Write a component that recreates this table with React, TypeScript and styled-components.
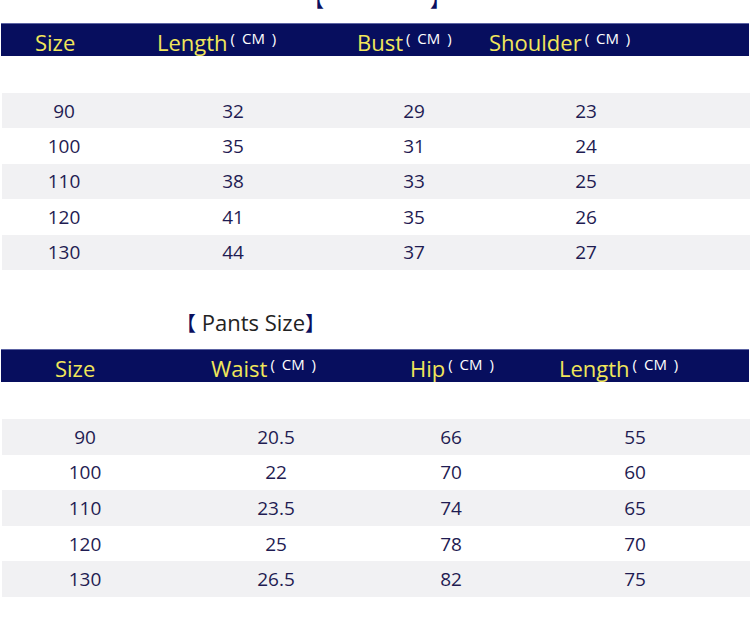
import styled, { createGlobalStyle } from "styled-components";

const GlobalStyle = createGlobalStyle`
  html, body {
    margin: 0;
    padding: 0;
    background: #ffffff;
  }
  body {
    font-family: "Open Sans", "Noto Sans", "Noto Sans CJK SC", sans-serif;
  }
`;

type Table = {
  columns: string;
  heads: { label: string; unit?: boolean; pad: number }[];
  rows: string[][];
};

const topTable: Table = {
  columns: "126px 212px 150px 194px 1fr",
  heads: [
    { label: "Size", pad: 34 },
    { label: "Length", unit: true, pad: 30 },
    { label: "Bust", unit: true, pad: 18 },
    { label: "Shoulder", unit: true, pad: 0 },
  ],
  rows: [
    ["90", "32", "29", "23"],
    ["100", "35", "31", "24"],
    ["110", "38", "33", "25"],
    ["120", "41", "35", "26"],
    ["130", "44", "37", "27"],
  ],
};

const pantsTable: Table = {
  columns: "168px 214px 136px 232px",
  heads: [
    { label: "Size", pad: 54 },
    { label: "Waist", unit: true, pad: 42 },
    { label: "Hip", unit: true, pad: 27 },
    { label: "Length", unit: true, pad: 40 },
  ],
  rows: [
    ["90", "20.5", "66", "55"],
    ["100", "22", "70", "60"],
    ["110", "23.5", "74", "65"],
    ["120", "25", "78", "70"],
    ["130", "26.5", "82", "75"],
  ],
};

const Page = styled.div`
  width: 750px;
  height: 630px;
  overflow: hidden;
  display: flex;
  flex-direction: column;
`;

// section title, placed from the left edge like the reference
const Title = styled.div<{ $offset: number; $height: number; $left: number }>`
  height: ${(p) => p.$height}px;
  margin-top: ${(p) => p.$offset}px;
  padding-left: ${(p) => p.$left}px;
  display: flex;
  align-items: center;
  font-size: 22px;
  color: #222222;
  white-space: nowrap;
`;

const Bracket = styled.span`
  font-family: "Noto Sans CJK SC", sans-serif;
  color: #0a0f5f;
  font-size: 20px;
`;

const HiddenText = styled.span<{ $w: number }>`
  display: inline-block;
  width: ${(p) => p.$w}px;
  visibility: hidden;
`;

const HeaderBar = styled.div<{ $columns: string }>`
  display: grid;
  grid-template-columns: ${(p) => p.$columns};
  height: 33px;
  margin-left: 1px;
  width: 748px;
  background: #070e5e;
  border-top: 1px solid #5c63a3;
  box-sizing: border-box;
`;

const HeadCell = styled.div<{ $pad: number }>`
  padding-left: ${(p) => p.$pad}px;
  display: flex;
  align-items: flex-start;
  white-space: nowrap;
  color: #f1e65a;
`;

const HeadLabel = styled.span`
  font-size: 22px;
  line-height: 33px;
  margin-top: 2px;
`;

const Unit = styled.span`
  font-size: 15px;
  line-height: 15px;
  margin-top: 7px;
  margin-left: 3px;
  color: #ffffff;
  word-spacing: 3px;
`;

const Gap = styled.div`
  height: 37px;
`;

const Row = styled.div<{ $columns: string; $shade: boolean; $h: number }>`
  display: grid;
  grid-template-columns: ${(p) => p.$columns};
  height: ${(p) => p.$h}px;
  margin-left: 2px;
  background: ${(p) => (p.$shade ? "#f1f1f3" : "#ffffff")};
  align-items: center;
`;

const Cell = styled.div`
  text-align: center;
  font-size: 19px;
  color: #1f1c52;
  margin-left: -2px;
`;

function SizeTable({ table, rowH }: { table: Table; rowH: number }) {
  return (
    <>
      <HeaderBar $columns={table.columns}>
        {table.heads.map((h) => (
          <HeadCell key={h.label} $pad={h.pad}>
            <HeadLabel>{h.label}</HeadLabel>
            {h.unit && <Unit>( CM )</Unit>}
          </HeadCell>
        ))}
      </HeaderBar>
      <Gap />
      {table.rows.map((r, i) => (
        <Row key={r[0]} $columns={table.columns} $shade={i % 2 === 0} $h={rowH}>
          {r.map((v, j) => (
            <Cell key={j}>{v}</Cell>
          ))}
        </Row>
      ))}
    </>
  );
}

export default function App() {
  return (
    <Page>
      <GlobalStyle />
      <Title $offset={-27} $height={50} $left={304}>
        <Bracket>【</Bracket>
        <HiddenText $w={106}>Top Size</HiddenText>
        <Bracket>】</Bracket>
      </Title>
      <SizeTable table={topTable} rowH={35.4} />
      <Title $offset={26} $height={53} $left={176}>
        <Bracket>【</Bracket>
        <span>&nbsp;Pants Size</span>
        <Bracket>】</Bracket>
      </Title>
      <SizeTable table={pantsTable} rowH={35.6} />
    </Page>
  );
}
